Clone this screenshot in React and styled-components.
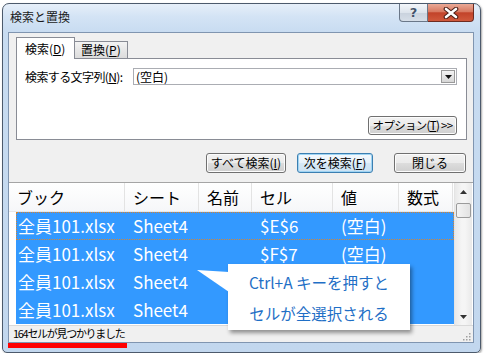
import React from "react";
import styled, { createGlobalStyle } from "styled-components";

const GlobalStyle = createGlobalStyle`
  html, body { margin: 0; padding: 0; background: #fff; }
  body { font-family: "Noto Sans CJK JP", "Noto Sans", sans-serif; }
  * { box-sizing: border-box; }
`;

const rows = [
  { book: "全員101.xlsx", sheet: "Sheet4", name: "", cell: "$E$6", value: "(空白)", focus: true },
  { book: "全員101.xlsx", sheet: "Sheet4", name: "", cell: "$F$7", value: "(空白)" },
  { book: "全員101.xlsx", sheet: "Sheet4", name: "", cell: "", value: "" },
  { book: "全員101.xlsx", sheet: "Sheet4", name: "", cell: "", value: "" },
];

const columns = ["ブック", "シート", "名前", "セル", "値", "数式"];

function App() {
  return (
    <>
      <GlobalStyle />
      <Window>
        <TitleBar>
          <Title>検索と置換</Title>
          <Caption>
            <HelpButton>?</HelpButton>
            <CloseButton>
              <svg width="16" height="12" viewBox="0 0 16 12">
                <path d="M3 2 L13 10 M13 2 L3 10" stroke="#4a1d15" strokeWidth="4.6" strokeLinecap="round" />
                <path d="M3 2 L13 10 M13 2 L3 10" stroke="#fff" strokeWidth="2.6" strokeLinecap="round" />
              </svg>
            </CloseButton>
          </Caption>
        </TitleBar>

        <Content>
          <TabArea>
            <TabRow>
              <Tab $active>検索(<u>D</u>)</Tab>
              <Tab>置換(<u>P</u>)</Tab>
            </TabRow>
            <Panel>
              <FindRow>
                <Label>検索する文字列(<u>N</u>):</Label>
                <Combo>
                  <ComboText>(空白)</ComboText>
                  <DropButton>
                    <svg width="7" height="4" viewBox="0 0 7 4">
                      <path d="M0 0 H7 L3.5 4 Z" fill="#111" />
                    </svg>
                  </DropButton>
                </Combo>
              </FindRow>
              <OptionsRow>
                <Button $w={89} $h={19} $tight>オプション(<u>T</u>) &gt;&gt;</Button>
              </OptionsRow>
            </Panel>
          </TabArea>

          <ButtonRow>
            <Button $w={80}>すべて検索(<u>I</u>)</Button>
            <Button $w={76} $focused>次を検索(<u>F</u>)</Button>
            <Button $w={72} $gap={10}>閉じる</Button>
          </ButtonRow>

          <List>
            <ListMain>
              <Header>
                {columns.map((c) => (
                  <HeadCell key={c}>{c}</HeadCell>
                ))}
              </Header>
              {rows.map((r, i) => (
                <Row key={i} $focus={r.focus}>
                  <Cell $first>{r.book}</Cell>
                  <Cell>{r.sheet}</Cell>
                  <Cell>{r.name}</Cell>
                  <Cell>{r.cell}</Cell>
                  <Cell>{r.value}</Cell>
                  <Cell></Cell>
                </Row>
              ))}
            </ListMain>
            <ScrollBar>
              <ArrowButton>
                <svg width="7" height="4" viewBox="0 0 7 4">
                  <path d="M0 4 H7 L3.5 0 Z" fill="#333" />
                </svg>
              </ArrowButton>
              <Thumb />
              <Track />
              <ArrowButton>
                <svg width="7" height="4" viewBox="0 0 7 4">
                  <path d="M0 0 H7 L3.5 4 Z" fill="#333" />
                </svg>
              </ArrowButton>
            </ScrollBar>

            <Callout>
              <Pointer width="32" height="24" viewBox="0 0 32 24">
                <polygon points="0,0 32,2 32,22" fill="#fff" />
              </Pointer>
              <CalloutLine>Ctrl+A キーを押すと</CalloutLine>
              <CalloutLine>セルが全選択される</CalloutLine>
            </Callout>
          </List>

          <StatusBar>
            <StatusText>164セルが見つかりました</StatusText>
            <Grip width="9" height="9" viewBox="0 0 9 9">
              {[[7, 1], [7, 4], [4, 4], [7, 7], [4, 7], [1, 7]].map(([x, y], i) => (
                <rect key={i} x={x} y={y} width="1.5" height="1.5" fill="#a0a0a0" />
              ))}
            </Grip>
          </StatusBar>
        </Content>

        <RedMark />
      </Window>
    </>
  );
}

const Window = styled.div`
  position: relative;
  width: 479px;
  height: 350px;
  margin: 3px 0 0 2px;
  padding: 0 6px 9px 5px;
  border: 1px solid #4c5a6c;
  border-radius: 7px 7px 5px 5px;
  background: linear-gradient(#e6eff9 0, #d4e4f5 12px, #c8dcf1 28px, #c2d7ee 100%);
  display: flex;
  flex-direction: column;
  box-shadow: 1px 1px 2px rgba(0, 0, 0, 0.35);
`;

const TitleBar = styled.div`
  height: 28px;
  display: flex;
  justify-content: space-between;
  align-items: flex-start;
`;

const Title = styled.div`
  padding: 5px 0 0 2px;
  font-size: 12px;
  line-height: 16px;
  color: #1a1a1a;
`;

const Caption = styled.div`
  display: flex;
  height: 18px;
`;

const HelpButton = styled.div`
  width: 29px;
  height: 18px;
  border: 1px solid #6a7788;
  border-top: none;
  border-radius: 0 0 0 4px;
  background: linear-gradient(#f3f6fa 0, #dde4ec 50%, #c9d2dd 51%, #d6dee8 100%);
  color: #44536a;
  font-family: "DejaVu Sans", sans-serif;
  font-size: 13px;
  font-weight: bold;
  line-height: 17px;
  text-align: center;
  text-shadow: 0 0 1px #fff;
`;

const CloseButton = styled.div`
  width: 46px;
  height: 18px;
  border: 1px solid #6e2b20;
  border-top: none;
  border-left: none;
  border-radius: 0 0 4px 0;
  background: linear-gradient(#eaa996 0, #d87a62 45%, #c2432a 52%, #d0593c 100%);
  display: flex;
  align-items: center;
  justify-content: center;
`;

const Content = styled.div`
  flex: 1;
  display: flex;
  flex-direction: column;
  background: #f0f0f0;
  border: 1px solid #8095b0;
`;

const TabArea = styled.div`
  padding: 4px 6px 0 7px;
`;

const TabRow = styled.div`
  display: flex;
  align-items: flex-end;
  height: 21px;
  position: relative;
  z-index: 1;
`;

const Tab = styled.div`
  height: ${(p) => (p.$active ? "22px" : "17px")};
  margin-bottom: ${(p) => (p.$active ? "-1px" : "0")};
  width: ${(p) => (p.$active ? "59px" : "53px")};
  padding-left: ${(p) => (p.$active ? "8px" : "6px")};
  padding-top: ${(p) => (p.$active ? "3px" : "0")};
  border: 1px solid #898c95;
  border-left: ${(p) => (p.$active ? "1px solid #898c95" : "none")};
  border-bottom: none;
  background: ${(p) => (p.$active ? "#fff" : "linear-gradient(#f3f3f3, #dcdcdc)")};
  font-size: 12px;
  line-height: 16px;
  color: #000;
`;

const Panel = styled.div`
  height: 82px;
  border: 1px solid #898c95;
  background: #fff;
  padding: 9px 9px 4px 8px;
  display: flex;
  flex-direction: column;
  justify-content: space-between;
`;

const FindRow = styled.div`
  display: flex;
  align-items: center;
  height: 17px;
`;

const Label = styled.div`
  width: 108px;
  font-size: 12px;
  line-height: 16px;
  letter-spacing: -0.6px;
  color: #000;
  white-space: nowrap;
`;

const Combo = styled.div`
  flex: 1;
  height: 17px;
  border: 1px solid #abadb3;
  background: #fff;
  display: flex;
  align-items: center;
  justify-content: space-between;
  padding-right: 1px;
`;

const ComboText = styled.span`
  padding-left: 2px;
  font-size: 12px;
  line-height: 15px;
  color: #000;
`;

const DropButton = styled.div`
  width: 14px;
  height: 13px;
  border: 1px solid #9a9a9a;
  background: linear-gradient(#f4f4f4, #d6d6d6);
  display: flex;
  align-items: center;
  justify-content: center;
`;

const OptionsRow = styled.div`
  display: flex;
  justify-content: flex-end;
`;

const Button = styled.div`
  width: ${(p) => p.$w}px;
  height: ${(p) => p.$h || 20}px;
  margin-left: ${(p) => p.$gap || 0}px;
  border: 1px solid ${(p) => (p.$focused ? "#3c7fb1" : "#707070")};
  border-radius: 3px;
  background: ${(p) =>
    p.$focused
      ? "linear-gradient(#f4f9fd 0, #e6f1fa 50%, #d6e8f6 51%, #cce2f3 100%)"
      : "linear-gradient(#f2f2f2 0, #ebebeb 50%, #dddddd 51%, #cfcfcf 100%)"};
  box-shadow: ${(p) => (p.$focused ? "inset 0 0 0 1px #9fd4f3" : "inset 0 0 0 1px #fcfcfc")};
  font-size: ${(p) => (p.$tight ? "11.5px" : "12px")};
  letter-spacing: ${(p) => (p.$tight ? "-0.7px" : "0")};
  line-height: ${(p) => (p.$h || 20) - 2}px;
  text-align: center;
  color: #000;
  white-space: nowrap;
  overflow: hidden;
`;

const ButtonRow = styled.div`
  display: flex;
  justify-content: flex-end;
  gap: 11px;
  margin-top: 13px;
  padding-right: 7px;
`;

const List = styled.div`
  position: relative;
  margin-top: 9px;
  height: 143px;
  border-top: 1px solid #a5a5a5;
  background: #fff;
  display: flex;
`;

const ListMain = styled.div`
  width: 445px;
`;

const Header = styled.div`
  display: grid;
  grid-template-columns: 116px 74px 53px 81px 66px 54px;
  height: 29px;
  border-bottom: 1px solid #e8e8e8;
  background: linear-gradient(#ffffff, #f6f7f9);
`;

const HeadCell = styled.div`
  padding-left: 8px;
  border-right: 1px solid #e3e3e3;
  font-size: 16px;
  line-height: 28px;
  color: #000;
`;

const Row = styled.div`
  display: grid;
  grid-template-columns: 109px 74px 53px 81px 66px 54px;
  margin-left: 7px;
  height: 28px;
  background: #3399ff;
  outline: ${(p) => (p.$focus ? "1px dotted #d7832e" : "none")};
  outline-offset: -1px;
`;

const Cell = styled.div`
  padding-left: ${(p) => (p.$first ? "2px" : "8px")};
  font-size: 17px;
  line-height: 28px;
  color: #fff;
  white-space: nowrap;
  overflow: hidden;
`;

const ScrollBar = styled.div`
  width: 18px;
  border-left: 1px solid #e4e4e4;
  background: linear-gradient(90deg, #e9e9e9, #f5f5f5 40%, #f5f5f5 60%, #e9e9e9);
  display: flex;
  flex-direction: column;
`;

const ArrowButton = styled.div`
  height: 17px;
  display: flex;
  align-items: center;
  justify-content: center;
`;

const Thumb = styled.div`
  height: 15px;
  margin: 3px 1px 0 1px;
  border: 1px solid #9b9b9b;
  border-radius: 2px;
  background: linear-gradient(90deg, #f4f4f4, #e2e2e2);
`;

const Track = styled.div`
  flex: 1;
`;

const Callout = styled.div`
  position: absolute;
  left: 219px;
  top: 81px;
  width: 182px;
  height: 66px;
  background: #fff;
  box-shadow: 2px 3px 4px rgba(0, 0, 0, 0.4);
  padding-top: 3px;
  z-index: 2;
`;

const Pointer = styled.svg`
  position: absolute;
  left: -31px;
  top: 6px;
`;

const CalloutLine = styled.div`
  font-size: 15.5px;
  line-height: 31px;
  text-align: center;
  color: #1f6fc6;
  white-space: nowrap;
`;

const StatusBar = styled.div`
  height: 17px;
  border-top: 1px solid #d9d9d9;
  display: flex;
  align-items: flex-end;
  justify-content: space-between;
  padding: 0 2px 1px 4px;
`;

const StatusText = styled.div`
  font-size: 11px;
  line-height: 15px;
  letter-spacing: -1.3px;
  color: #000;
`;

const Grip = styled.svg`
  display: block;
`;

const RedMark = styled.div`
  position: absolute;
  left: 5px;
  top: 339px;
  width: 119px;
  height: 5px;
  background: #ff0000;
  z-index: 3;
`;

export default App;
